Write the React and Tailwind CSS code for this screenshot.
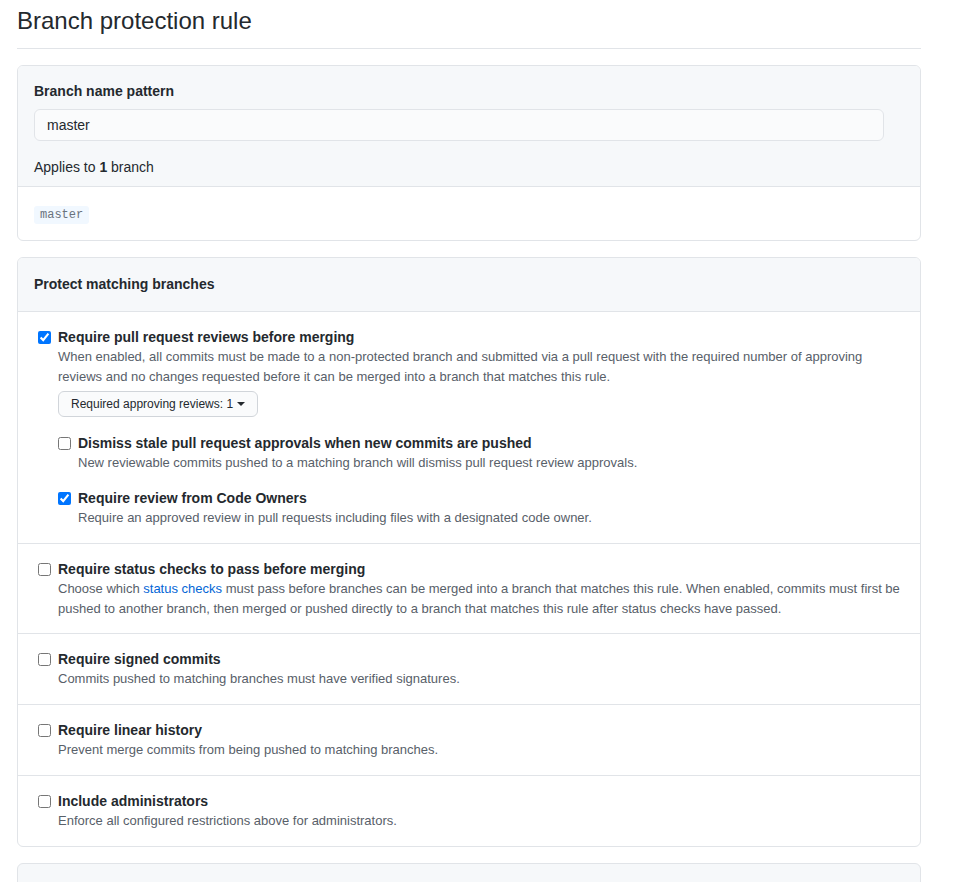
const Check = ({ checked }) => (
  <input
    type="checkbox"
    defaultChecked={checked}
    className="mt-[4px] h-[13px] w-[13px] shrink-0"
  />
);

const Option = ({ checked, title, children, extra }) => (
  <div className="flex items-start gap-[7px]">
    <Check checked={checked} />
    <div className="flex-1">
      <div className="text-[14px] font-bold leading-[20px] text-[#24292e]">{title}</div>
      <p className="text-[13px] leading-[20px] text-[#586069]">{children}</p>
      {extra}
    </div>
  </div>
);

const Row = ({ children, last, tight }) => (
  <div
    className={`px-5 pt-[15px] ${tight ? 'pb-[14px]' : 'pb-[15px]'} ${last ? '' : 'border-b border-[#e1e4e8]'}`}
  >
    {children}
  </div>
);

export default function App() {
  return (
    <div className="min-h-[882px] bg-white font-['Liberation_Sans',Arial,sans-serif] text-[#24292e]">
      <div className="w-[904px] ml-[17px]">
        <h1 className="pt-[4px] pb-[10px] text-[24px] leading-[34px] font-normal border-b border-[#e1e4e8]">
          Branch protection rule
        </h1>

        {/* Branch name pattern */}
        <div className="mt-4 rounded-md border border-[#e1e4e8] overflow-hidden">
          <div className="bg-[#f6f8fa] px-4 pt-[15px] pb-[9px] border-b border-[#e1e4e8]">
            <label className="block text-[14px] font-bold leading-[20px]">Branch name pattern</label>
            <div className="mt-2 w-[850px] h-[32px] rounded-md border border-[#e1e4e8] bg-[#fafbfc] px-3 flex items-center text-[14px]">
              master
            </div>
            <p className="mt-4 text-[14px] leading-[20px]">
              Applies to <b>1</b> branch
            </p>
          </div>
          <div className="flex px-4 pt-[19px] pb-[16px]">
            <code className="rounded-[3px] bg-[#f1f8ff] px-[6px] text-[12px] leading-[18px] text-[#6a737d] font-['Liberation_Mono',monospace]">
              master
            </code>
          </div>
        </div>

        {/* Protect matching branches */}
        <div className="mt-4 rounded-md border border-[#e1e4e8] overflow-hidden">
          <div className="bg-[#f6f8fa] px-4 py-4 border-b border-[#e1e4e8] text-[14px] font-bold leading-[21px]">
            Protect matching branches
          </div>

          <Row>
            <Option
              checked
              title="Require pull request reviews before merging"
              extra={
                <div>
                  <button className="mt-[4px] h-[26px] rounded-md border border-[#d1d5da] bg-[#fafbfc] px-3 text-[12px] text-[#24292e] flex items-center gap-[4px]">
                    Required approving reviews: 1
                    <span className="inline-block w-0 h-0 border-l-[4px] border-r-[4px] border-t-[4px] border-l-transparent border-r-transparent border-t-[#24292e]" />
                  </button>
                  <div className="mt-[16px] flex flex-col gap-[15px]">
                    <Option title="Dismiss stale pull request approvals when new commits are pushed">
                      New reviewable commits pushed to a matching branch will dismiss pull request review approvals.
                    </Option>
                    <Option checked title="Require review from Code Owners">
                      Require an approved review in pull requests including files with a designated code owner.
                    </Option>
                  </div>
                </div>
              }
            >
              When enabled, all commits must be made to a non-protected branch and submitted via a pull request with the
              required number of approving reviews and no changes requested before it can be merged into a branch that
              matches this rule.
            </Option>
          </Row>

          <Row tight>
            <Option title="Require status checks to pass before merging">
              Choose which <span className="text-[#0366d6]">status checks</span> must pass before branches can be merged into a
              branch that matches this rule. When enabled, commits must first be pushed to another branch, then merged or
              pushed directly to a branch that matches this rule after status checks have passed.
            </Option>
          </Row>

          <Row>
            <Option title="Require signed commits">
              Commits pushed to matching branches must have verified signatures.
            </Option>
          </Row>

          <Row>
            <Option title="Require linear history">
              Prevent merge commits from being pushed to matching branches.
            </Option>
          </Row>

          <Row last>
            <Option title="Include administrators">
              Enforce all configured restrictions above for administrators.
            </Option>
          </Row>
        </div>

        <div className="mt-4 h-[60px] rounded-t-md border border-[#e1e4e8] bg-[#f6f8fa]" />
      </div>
    </div>
  );
}
